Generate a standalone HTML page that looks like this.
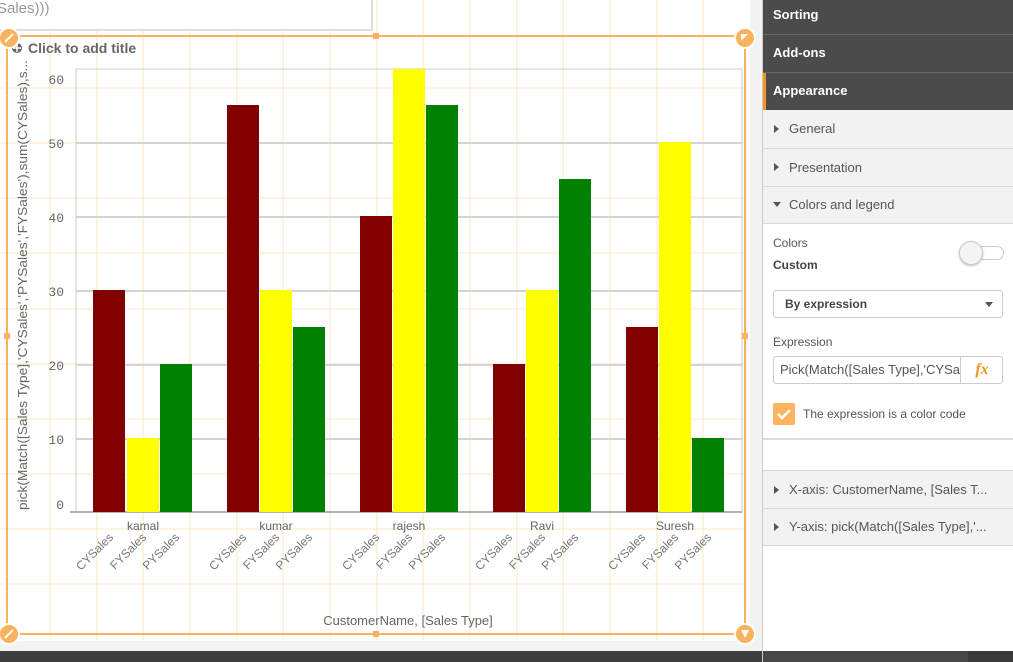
<!DOCTYPE html>
<html><head><meta charset="utf-8"><style>
body{margin:0;width:1013px;height:662px;overflow:hidden;background:#fff;font-family:"Liberation Sans",sans-serif;position:relative}
.p{position:absolute}
.hd{position:absolute;left:763px;width:250px;background:#4b4b4b;color:#fff;font-size:13px;font-weight:bold;box-sizing:border-box;padding-left:10px;border-bottom:1px solid #666}
.row{position:absolute;left:763px;width:250px;background:#f2f2f2;color:#555;font-size:13px;box-sizing:border-box;padding-left:26px;border-bottom:1px solid #d9d9d9}
.tri{position:absolute;left:11px;width:0;height:0;border-top:4px solid transparent;border-bottom:4px solid transparent;border-left:5px solid #555}
.trd{position:absolute;left:10px;width:0;height:0;border-left:4px solid transparent;border-right:4px solid transparent;border-top:5px solid #555}
</style></head><body>
<svg class="p" style="left:0;top:0" width="763" height="662">
<rect x="0" y="0" width="763" height="662" fill="#fff"/>
<rect x="750" y="0" width="13" height="662" fill="#f2f2f2"/>
<rect x="0" y="641" width="763" height="10" fill="#f2f2f2"/>
<g stroke="#fde4c6" stroke-width="1">
<line x1="50" y1="0" x2="50" y2="640"/><line x1="97" y1="0" x2="97" y2="640"/><line x1="143" y1="0" x2="143" y2="640"/><line x1="190" y1="0" x2="190" y2="640"/><line x1="237" y1="0" x2="237" y2="640"/><line x1="283" y1="0" x2="283" y2="640"/><line x1="330" y1="0" x2="330" y2="640"/><line x1="377" y1="0" x2="377" y2="640"/><line x1="423" y1="0" x2="423" y2="640"/><line x1="470" y1="0" x2="470" y2="640"/><line x1="517" y1="0" x2="517" y2="640"/><line x1="563" y1="0" x2="563" y2="640"/><line x1="610" y1="0" x2="610" y2="640"/><line x1="657" y1="0" x2="657" y2="640"/><line x1="703" y1="0" x2="703" y2="640"/>
<line x1="0" y1="88" x2="745" y2="88"/><line x1="0" y1="143" x2="745" y2="143"/><line x1="0" y1="198" x2="745" y2="198"/><line x1="0" y1="253" x2="745" y2="253"/><line x1="0" y1="309" x2="745" y2="309"/><line x1="0" y1="364" x2="745" y2="364"/><line x1="0" y1="419" x2="745" y2="419"/><line x1="0" y1="474" x2="745" y2="474"/><line x1="0" y1="529" x2="745" y2="529"/><line x1="0" y1="584" x2="745" y2="584"/>
</g>
<rect x="-2" y="-2" width="374" height="32" fill="#fff" stroke="#ddd" stroke-width="2"/>
<text x="-3" y="13" font-size="15" fill="#999">Sales)))</text>
<rect x="76" y="69" width="666" height="443" fill="none" stroke="#ccc"/>
<g stroke="#d4d4d4" stroke-width="2">
<line x1="76" y1="143" x2="742" y2="143"/><line x1="76" y1="217" x2="742" y2="217"/><line x1="76" y1="291" x2="742" y2="291"/><line x1="76" y1="365" x2="742" y2="365"/><line x1="76" y1="439" x2="742" y2="439"/>
</g>
<line x1="70" y1="512" x2="742" y2="512" stroke="#999" stroke-width="1.5"/>
<g font-family="Liberation Mono,monospace" font-size="13" fill="#666" text-anchor="end">
<text x="64" y="84">60</text><text x="64" y="148">50</text><text x="64" y="222">40</text><text x="64" y="296">30</text><text x="64" y="370">20</text><text x="64" y="444">10</text><text x="64" y="509">0</text>
</g>
<text transform="translate(27,285) rotate(-90)" text-anchor="middle" font-size="13" fill="#666" textLength="450" lengthAdjust="spacingAndGlyphs">pick(Match([Sales Type],'CYSales','PYSales','FYSales'),sum(CYSales),s...</text>
<g>
<rect x="93" y="290" width="32" height="222" fill="#800000"/><rect x="127" y="438" width="32" height="74" fill="#ffff00"/><rect x="160" y="364" width="32" height="148" fill="#008000"/>
<rect x="227" y="105" width="32" height="407" fill="#800000"/><rect x="260" y="290" width="32" height="222" fill="#ffff00"/><rect x="293" y="327" width="32" height="185" fill="#008000"/>
<rect x="360" y="216" width="32" height="296" fill="#800000"/><rect x="393" y="69" width="32" height="443" fill="#ffff00"/><rect x="426" y="105" width="32" height="407" fill="#008000"/>
<rect x="493" y="364" width="32" height="148" fill="#800000"/><rect x="526" y="290" width="32" height="222" fill="#ffff00"/><rect x="559" y="179" width="32" height="333" fill="#008000"/>
<rect x="626" y="327" width="32" height="185" fill="#800000"/><rect x="659" y="142" width="32" height="370" fill="#ffff00"/><rect x="692" y="438" width="32" height="74" fill="#008000"/>
</g>
<g font-size="12" fill="#666" text-anchor="middle">
<text x="143" y="530">kamal</text><text x="276" y="530">kumar</text><text x="409" y="530">rajesh</text><text x="542" y="530">Ravi</text><text x="675" y="530">Suresh</text>
</g>
<g font-size="12" fill="#777" text-anchor="end">
<text transform="translate(114,538) rotate(-45)">CYSales</text><text transform="translate(147,538) rotate(-45)">FYSales</text><text transform="translate(180,538) rotate(-45)">PYSales</text>
<text transform="translate(247,538) rotate(-45)">CYSales</text><text transform="translate(280,538) rotate(-45)">FYSales</text><text transform="translate(313,538) rotate(-45)">PYSales</text>
<text transform="translate(380,538) rotate(-45)">CYSales</text><text transform="translate(413,538) rotate(-45)">FYSales</text><text transform="translate(446,538) rotate(-45)">PYSales</text>
<text transform="translate(513,538) rotate(-45)">CYSales</text><text transform="translate(546,538) rotate(-45)">FYSales</text><text transform="translate(579,538) rotate(-45)">PYSales</text>
<text transform="translate(646,538) rotate(-45)">CYSales</text><text transform="translate(679,538) rotate(-45)">FYSales</text><text transform="translate(712,538) rotate(-45)">PYSales</text>
</g>
<text x="408" y="625" font-size="13" fill="#666" text-anchor="middle">CustomerName,  [Sales Type]</text>
<circle cx="17" cy="48" r="5" fill="#666"/><line x1="13" y1="48" x2="21" y2="48" stroke="#fff" stroke-width="1.5"/><line x1="17" y1="44" x2="17" y2="52" stroke="#fff" stroke-width="1.5"/>
<text x="28" y="53" font-size="14" font-weight="bold" fill="#666">Click to add title</text>
<g stroke="#f9b25d" stroke-width="2" fill="none">
<line x1="9" y1="36" x2="745" y2="36"/><line x1="9" y1="634" x2="745" y2="634"/><line x1="7" y1="36" x2="7" y2="634"/><line x1="745" y1="36" x2="745" y2="634"/>
</g>
<g fill="#f9b25d">
<rect x="373" y="33" width="6" height="6"/><rect x="373" y="631" width="6" height="6"/><rect x="4" y="333" width="6" height="6"/><rect x="742" y="333" width="6" height="6"/>
<circle cx="9" cy="38" r="10" stroke="#fff" stroke-width="2"/><circle cx="745" cy="38" r="10" stroke="#fff" stroke-width="2"/><circle cx="9" cy="634" r="10" stroke="#fff" stroke-width="2"/><circle cx="745" cy="634" r="10" stroke="#fff" stroke-width="2"/>
</g>
<g fill="#fff"><line x1="5" y1="42" x2="13" y2="34" stroke="#fff" stroke-width="2"/><line x1="5" y1="638" x2="13" y2="630" stroke="#fff" stroke-width="2"/>
<path d="M741 34h7l-7 7z"/><path d="M741 630h8l-4 8z"/></g>
<rect x="0" y="651" width="763" height="11" fill="#3d3d3d"/>
</svg>
<div class="p" style="left:762px;top:0;width:1px;height:662px;background:#ccc"></div>
<div class="hd" style="top:0;height:35px;line-height:30px">Sorting</div>
<div class="hd" style="top:35px;height:38px;line-height:36px">Add-ons</div>
<div class="hd" style="top:73px;height:37px;line-height:36px;border-left:3px solid #f7931e;padding-left:7px;border-bottom:none">Appearance</div>
<div class="row" style="top:110px;height:39px;line-height:38px"><span class="tri" style="top:15px"></span>General</div>
<div class="row" style="top:149px;height:38px;line-height:37px"><span class="tri" style="top:14px"></span>Presentation</div>
<div class="row" style="top:187px;height:37px;line-height:36px"><span class="trd" style="top:15px"></span>Colors and legend</div>
<div class="p" style="left:773px;top:236px;font-size:12px;color:#555">Colors</div>
<div class="p" style="left:773px;top:258px;font-size:12px;color:#444;font-weight:bold">Custom</div>
<div class="p" style="left:962px;top:246px;width:40px;height:12px;border:1px solid #ccc;border-radius:7px;background:#fff"></div>
<div class="p" style="left:959px;top:241px;width:22px;height:22px;border-radius:50%;background:#f4f4f4;border:1px solid #ccc;box-shadow:0 1px 2px #bbb"></div>
<div class="p" style="left:773px;top:290px;height:26px;border:1px solid #ccc;border-radius:3px;font-size:12px;font-weight:bold;color:#444;line-height:26px;padding-left:11px;width:217px">By expression<span style="position:absolute;right:9px;top:11px;border-left:4px solid transparent;border-right:4px solid transparent;border-top:5px solid #555"></span></div>
<div class="p" style="left:773px;top:335px;font-size:12px;color:#555">Expression</div>
<div class="p" style="left:773px;top:356px;width:228px;height:26px;border:1px solid #ccc;border-radius:3px;overflow:hidden">
<div class="p" style="left:6px;top:0;line-height:26px;font-size:13px;color:#555;white-space:nowrap;width:180px;overflow:hidden">Pick(Match([Sales Type],'CYSales'</div>
<div class="p" style="left:186px;top:0;width:42px;height:26px;border-left:1px solid #ccc;background:#fff;color:#f7931e;font-family:'Liberation Serif',serif;font-style:italic;font-weight:bold;font-size:16px;text-align:center;line-height:26px">fx</div></div>
<div class="p" style="left:773px;top:403px;width:22px;height:22px;background:#fbb55f;border-radius:2px"><svg width="22" height="22"><path d="M5 11l4 4 8-8" stroke="#fff" stroke-width="2.5" fill="none"/></svg></div>
<div class="p" style="left:803px;top:407px;font-size:12px;color:#555">The expression is a color code</div>
<div class="p" style="left:763px;top:438px;width:250px;height:2px;background:#ddd"></div>
<div class="row" style="top:470px;height:39px;line-height:38px;border-top:1px solid #d9d9d9"><span class="tri" style="top:15px"></span>X-axis: CustomerName, [Sales T...</div>
<div class="row" style="top:509px;height:37px;line-height:36px"><span class="tri" style="top:14px"></span>Y-axis: pick(Match([Sales Type],'...</div>
<div class="p" style="left:763px;top:651px;width:205px;height:11px;background:#484848"></div>
<div class="p" style="left:968px;top:651px;width:45px;height:11px;background:#3a3a3a"></div>
</body></html>
